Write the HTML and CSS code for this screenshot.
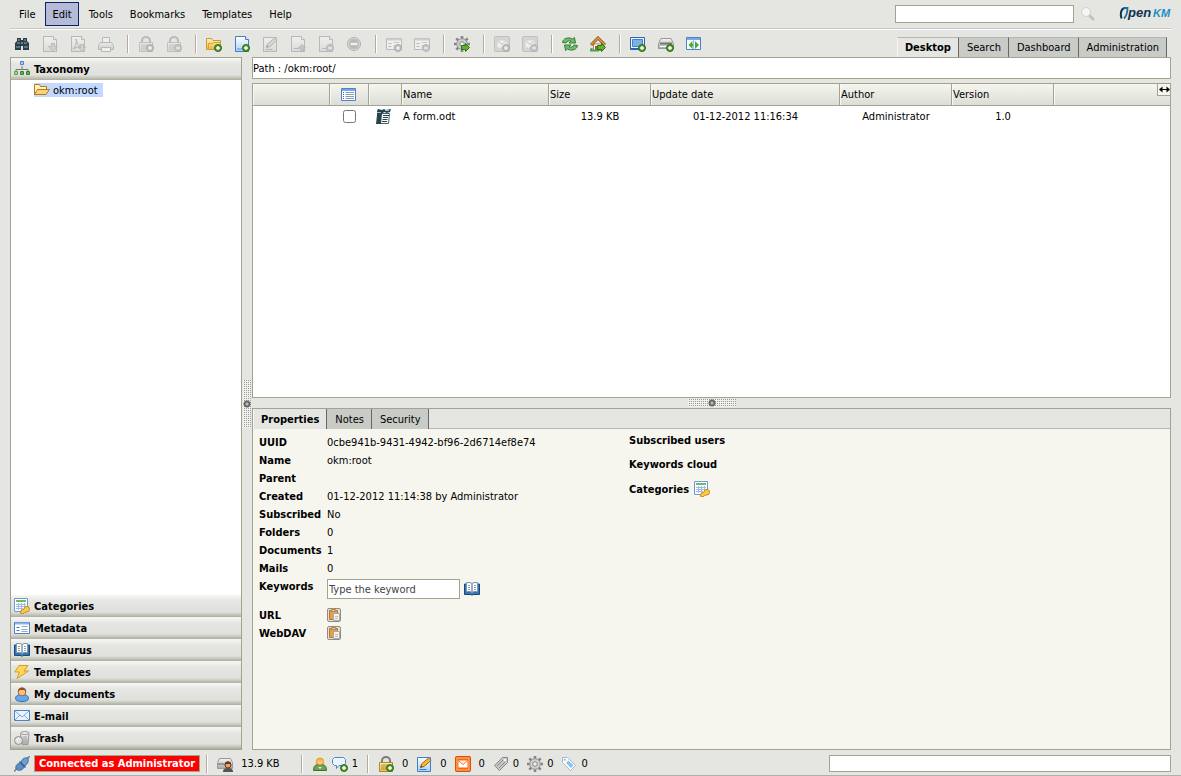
FILE: index.html
```html
<!DOCTYPE html>
<html lang="en">
<head>
	<meta charset="UTF-8">
	<meta name="viewport" content="width=device-width, initial-scale=1.0">
	<title>OpenKM</title>
	<link rel="stylesheet" href="styles.css">
</head>
<body>
	<!-- Icon set -->
	<svg class="icon-set" aria-hidden="true">
		<defs>
			<linearGradient id="gPage" x1="0" y1="0" x2="0" y2="1">
				<stop offset="0" stop-color="#fff"/><stop offset="1" stop-color="#a9d0f7"/>
			</linearGradient>
			<linearGradient id="gGrey" x1="0" y1="0" x2="0" y2="1">
				<stop offset="0" stop-color="#f4f4f4"/><stop offset="1" stop-color="#a9a9a9"/>
			</linearGradient>
			<linearGradient id="gGold" x1="0" y1="0" x2="0" y2="1">
				<stop offset="0" stop-color="#fff3b8"/><stop offset="1" stop-color="#edb93c"/>
			</linearGradient>
		</defs>
		<symbol id="plus" viewBox="0 0 16 16">
			<circle cx="12" cy="12" r="3.5" fill="#4f9a2b" stroke="#2f6b17"/>
			<path d="M12 10v4M10 12h4" stroke="#fff" stroke-width="1.4"/>
		</symbol>
		<symbol id="minus" viewBox="0 0 16 16">
			<circle cx="12" cy="12" r="3.5" fill="#999" stroke="#666"/>
			<path d="M10 12h4" stroke="#fff" stroke-width="1.4"/>
		</symbol>
		<symbol id="arrow" viewBox="0 0 16 16">
			<path d="M7.5 9.5h4v-2l4 4-4 4v-2h-4z" fill="#5fb32d" stroke="#2c7413"/>
		</symbol>
		<symbol id="page" viewBox="0 0 16 16">
			<path d="M1.500.5h10l3 3v12h-13z" fill="url(#gPage)" stroke="#3e7fc6"/>
			<path d="M11.500.5v3h3" fill="#fff" stroke="#3e7fc6"/>
		</symbol>
		<symbol id="binoculars" viewBox="0 0 16 16">
			<path d="M3 2h4v2h2V2h4v3l2 2v7H9v-4H7v4H1V7l2-2z" fill="#2d3e4b"/>
			<path d="M3 7h3M10 7h3M2 11h4M10 11h4M4 4h2M10 4h2" stroke="#93a9b8"/>
			<path d="M7 6h2v2H7z" fill="#6c8291"/>
		</symbol>
		<symbol id="download" viewBox="0 0 16 16">
			<use href="#page"/>
			<path d="M9.500 7.500h3v3h3l-4.500 5-4.500-5h3z" fill="#b0b0b0" stroke="#7e7e7e"/>
		</symbol>
		<symbol id="pdf" viewBox="0 0 16 16">
			<use href="#page"/>
			<path d="M3 13C6 10 7 7 6 3c1 5 3 7 7 8-4-1-7 0-10 2z" fill="none" stroke="#666"/>
			<path d="M10.500 8.500h3v3h2l-3.500 4-3.500-4h2z" fill="#b0b0b0" stroke="#7e7e7e"/>
		</symbol>
		<symbol id="print" viewBox="0 0 16 16">
			<path d="M4.500 7V1.500h7V7" fill="#fff" stroke="#777"/>
			<path d="M2.500 6.500h11l2 3v4h-15v-4z" fill="url(#gGrey)" stroke="#777"/>
			<path d="M3.500 11.500h9v4h-9z" fill="#fff" stroke="#777"/>
		</symbol>
		<symbol id="lock" viewBox="0 0 16 16">
			<path d="M4 7V4.500a4 3.500 0 0 1 8 0V7" fill="none" stroke="#7b7b7b" stroke-width="2"/>
			<path d="M1.500 6.500h13v9h-13z" fill="url(#gGold)" stroke="#b48722"/>
			<path d="M3 9h7M3 11h6M3 13h5" stroke="#a98a45"/>
		</symbol>
		<symbol id="lockAdd" viewBox="0 0 16 16"><use href="#lock"/><use href="#plus"/></symbol>
		<symbol id="lockDel" viewBox="0 0 16 16"><use href="#lock"/><use href="#minus"/></symbol>
		<symbol id="folderAdd" viewBox="0 0 16 16">
			<path d="M.5 13.500v-11h5l1.500 2h7.500v9z" fill="url(#gGold)" stroke="#c99a36"/>
			<path d="M2.500 13V7.500h4l1-1H14" fill="none" stroke="#d7a33b"/>
			<use href="#plus"/>
		</symbol>
		<symbol id="docAdd" viewBox="0 0 16 16"><use href="#page"/><path d="M3 13h6" stroke="#5a9ad8"/><use href="#plus"/></symbol>
		<symbol id="docEdit" viewBox="0 0 16 16">
			<path d="M1.500 1.500h13v14h-13z" fill="url(#gPage)" stroke="#3e7fc6"/>
			<path d="M3.500 13.500h7" stroke="#3e7fc6"/>
			<path d="M4.500 11.500l1-3.500 7-6 2.500 2.500-7 6z" fill="#f7b73c" stroke="#9a6a20"/>
			<path d="M4.500 11.500l.5-2 1.500 1.500z" fill="#333"/>
		</symbol>
		<symbol id="checkIn" viewBox="0 0 16 16">
			<use href="#page"/><path d="M4 12.500h5" stroke="#777"/>
			<path d="M10.500 15v-3h-2l3.500-3.500 3.500 3.500h-2v3z" fill="#999" stroke="#777"/>
		</symbol>
		<symbol id="docDel" viewBox="0 0 16 16"><use href="#page"/><path d="M4 12.500h4" stroke="#777"/><use href="#minus"/></symbol>
		<symbol id="remove" viewBox="0 0 16 16">
			<circle cx="8" cy="8" r="6.500" fill="#777" stroke="#666"/>
			<circle cx="8" cy="8" r="5.500" fill="none" stroke="#ccc"/>
			<path d="M4.500 8h7" stroke="#fff" stroke-width="2.400"/>
		</symbol>
		<symbol id="form" viewBox="0 0 16 16">
			<path d="M.5 2.500h15v11H.5z" fill="#fff" stroke="#4f81c7"/>
			<path d="M1 3.500h14" stroke="#8db4e8" stroke-width="2"/>
			<path d="M2.500 7.500h3M2.500 10.500h3" stroke="#4178cc"/>
			<path d="M7.500 6.500h6M7.500 9.500h6M7.500 11.500h6" stroke="#99a7b8"/>
		</symbol>
		<symbol id="formAdd" viewBox="0 0 16 16"><use href="#form"/><use href="#plus"/></symbol>
		<symbol id="formDel" viewBox="0 0 16 16"><use href="#form"/><use href="#minus"/></symbol>
		<symbol id="gear" viewBox="0 0 16 16">
			<path d="M8 0v16M0 8h16M2.300 2.300l11.400 11.400M13.700 2.300L2.300 13.700" stroke="#858585" stroke-width="2.600"/>
			<circle cx="8" cy="8" r="5.300" fill="#d0d0d0" stroke="#9a9a9a"/>
			<circle cx="8" cy="8" r="2.300" fill="#f1f1f1" stroke="#858585"/>
		</symbol>
		<symbol id="gearRun" viewBox="0 0 16 16"><use href="#gear"/><use href="#arrow"/></symbol>
		<symbol id="subscribe" viewBox="0 0 16 16">
			<rect x=".5" y=".5" width="15" height="15" rx="1" fill="#f36a12" stroke="#d94f05"/>
			<rect x="2" y="2" width="12" height="12" fill="none" stroke="#ffb579"/>
			<path d="M3.500 4.500h9v7h-9z" fill="#fff"/>
			<path d="M3.500 4.500L8 8.500l4.500-4" fill="none" stroke="#f36a12"/>
		</symbol>
		<symbol id="subPlain" viewBox="0 0 16 16">
			<rect x=".5" y=".5" width="15" height="15" rx="1" fill="#bbb" stroke="#888"/>
			<path d="M3.500 4.500h9v7h-9z" fill="#fff"/>
			<path d="M3.500 4.500L8 8.500l4.500-4" fill="none" stroke="#888"/>
		</symbol>
		<symbol id="subAdd" viewBox="0 0 16 16"><use href="#subPlain"/><use href="#plus"/></symbol>
		<symbol id="subDel" viewBox="0 0 16 16"><use href="#subPlain"/><use href="#minus"/></symbol>
		<symbol id="refresh" viewBox="0 0 16 16">
			<path d="M.5 6.500C1 2.500 6 .5 10.500 3l2-1.500 1 5.500H7l2-2C7 4.500 5 5 4 7z" fill="#71b96c" stroke="#34813a"/>
			<path d="M15.500 9.500C15 13.500 10 15.500 5.500 13l-2 1.500L2.500 9H9l-2 2c2 .5 4 0 5-2z" fill="#71b96c" stroke="#34813a"/>
		</symbol>
		<symbol id="home" viewBox="0 0 16 16">
			<path d="M3.500 8h9v6.500h-9z" fill="#fff" stroke="#b88452"/>
			<path d="M1 9l7-7 7 7" fill="none" stroke="#8d541b" stroke-width="3"/>
			<path d="M1 9l7-7 7 7" fill="none" stroke="#e39a45" stroke-width="1.400"/>
			<path d="M5 10h3v4H5z" fill="#9d612a"/><path d="M0 14.500h9M1.500 12v2" stroke="#4aa25b" stroke-width="2"/>
			<use href="#arrow"/>
		</symbol>
		<symbol id="scan" viewBox="0 0 16 16">
			<path d="M.5 1.500h14v12H.5z" fill="#e9f3fd" stroke="#2f65a9"/>
			<path d="M2.500 3.500h10v7h-10z" fill="#79b0e6" stroke="#4682c2"/><path d="M1 12.500h13" stroke="#2f65a9"/>
			<use href="#plus"/>
		</symbol>
		<symbol id="scanner" viewBox="0 0 16 16">
			<path d="M3 2.500h10l2.500 5v5H.5v-5z" fill="url(#gGrey)" stroke="#999"/>
			<path d="M2 7.500h12" stroke="#777" stroke-width="2"/><path d="M2 10.500h9" stroke="#fff"/>
		</symbol>
		<symbol id="scanAdd" viewBox="0 0 16 16"><use href="#scanner"/><use href="#plus"/></symbol>
		<symbol id="resize" viewBox="0 0 16 16">
			<path d="M.5 1.500h14v12H.5z" fill="#f7fbff" stroke="#4f81c7"/><path d="M1 3h13" stroke="#77a9e6" stroke-width="2"/>
			<path d="M6.500 5v3H8v2H6.500v3L2.500 9zM9 5v8l4-4z" fill="#48a844"/><path d="M7.500 4v9" stroke="#9dbde3"/>
		</symbol>
		<symbol id="taxonomy" viewBox="0 0 16 16">
			<path d="M8 5v4M2 10.500V8.500h12v2" fill="none" stroke="#777"/>
			<path d="M6.500.5h3v3h-3z" fill="#a6ccf7" stroke="#4c83cf"/>
			<path d="M.5 10.500h3v3h-3z" fill="#a5d993" stroke="#54a543"/>
			<path d="M6.500 10.500h3v3h-3z" fill="#5fb24a" stroke="#34852a"/>
			<path d="M12.500 10.500h3v3h-3z" fill="#5fb24a" stroke="#34852a"/>
		</symbol>
		<symbol id="folderOpen" viewBox="0 0 16 16">
			<path d="M.5 12.500v-10h5l1 2h6v3" fill="#fff2be" stroke="#b57a1e"/>
			<path d="M.5 12.500l3-5h12l-3.500 5z" fill="#f8d479" stroke="#b57a1e"/>
		</symbol>
		<symbol id="categories" viewBox="0 0 16 16">
			<path d="M.5.5h13v13H.5z" fill="#fff" stroke="#6c9bd8"/>
			<path d="M2 3h10" stroke="#76b868" stroke-width="2"/>
			<path d="M2 6.500h10M2 8.500h10M2 10.500h7M4.500 5v7M7.500 5v7M10.500 5v4" stroke="#9cbbe4"/>
			<path d="M6.500 15.500l.5-3 3-1.500a2.800 2.800 0 1 1 2.500 3l-2 .5-1.500 1.500z" fill="#f9c94c" stroke="#c98a1d"/>
		</symbol>
		<symbol id="book" viewBox="0 0 16 16">
			<path d="M.5 3v10.500H7l1 1 1-1h6.500V3z" fill="#3674ad" stroke="#174b80"/>
			<path d="M2.500 1.500H6l2 1v9l-2-1H2.500zM13.500 1.500H10l-2 1v9l2-1h3.500z" fill="#fff" stroke="#7898b5"/>
			<path d="M4 4.500h2M4 6.500h2M4 8.500h2M10 4.500h2M10 6.500h2M10 8.500h2" stroke="#999"/>
		</symbol>
		<symbol id="bolt" viewBox="0 0 16 16">
			<path d="M5 1.500L.8 8h4.500L3 14.500 14.500 7H10l4-5.500z" fill="#fcd75b" stroke="#d99b22"/>
		</symbol>
		<symbol id="user" viewBox="0 0 16 16">
			<path d="M1.500 12.500c0-3 3-4 6.500-4s6.500 1 6.500 4c0 2-3 3-6.500 3s-6.500-1-6.500-3z" fill="#62a7f0" stroke="#2b68b3"/>
			<circle cx="8" cy="6" r="3.800" fill="#ffc183" stroke="#a9622e"/>
			<path d="M4 6C3 0 13 0 12 6l-1.500-2h-5z" fill="#8d4d1f"/>
		</symbol>
		<symbol id="userGreen" viewBox="0 0 16 16">
			<path d="M1.500 14.500c0-5 2-6 6.500-6s6.500 1 6.500 6z" fill="#6ba24f" stroke="#3d7528"/><path d="M6 11l2 2 2-2z" fill="#dcefc9"/>
			<circle cx="8" cy="5.500" r="3.500" fill="#ffc48a" stroke="#c88b23"/>
			<path d="M4 8C2 0 14 0 12 8l-1-3.500H5z" fill="#f0b329"/>
		</symbol>
		<symbol id="mail" viewBox="0 0 16 16">
			<path d="M.5 2.500h15v10H.5z" fill="#eaf4ff" stroke="#4e82cb"/>
			<path d="M1 3l7 6 7-6M1 12l5-5M15 12l-5-5" fill="none" stroke="#7ba8e0"/>
		</symbol>
		<symbol id="trash" viewBox="0 0 16 16">
			<path d="M6.500 3.500h8.500l-1 11H8z" fill="url(#gGrey)" stroke="#999"/>
			<ellipse cx="10.800" cy="3" rx="4" ry="1.500" fill="#eee" stroke="#999"/>
			<path d="M10 6v7M12 6v7" stroke="#aaa"/>
			<circle cx="4.500" cy="10.500" r="4" fill="#e3e3e3" stroke="#8b8b8b"/><path d="M3 10l2-2" stroke="#fff"/>
		</symbol>
		<symbol id="plug" viewBox="0 0 16 16">
			<path d="M0 15.500l4-4M12 4l4-4" stroke="#667f9c" stroke-width="1.500"/>
			<path d="M2 13c-1-4 2-6 5-6l3 3c0 3-3 5-6 4z" fill="#5d8dc2" stroke="#4470a6"/>
			<path d="M7 7c0-3 3-6 7-5 1 4-1 7-4 8z" fill="#6f9dcd" stroke="#4470a6"/><path d="M5.500 5.500l6 6" stroke="#345f94" stroke-width="1.500"/>
		</symbol>
		<symbol id="quota" viewBox="0 0 16 16">
			<path d="M2.500 2.500h11l2 4v6H.5v-6z" fill="url(#gGrey)" stroke="#999"/><path d="M1 8h8" stroke="#999" stroke-width="2"/>
			<path d="M6 16c0-3 2-4 5-4s5 1 5 4z" fill="#555"/><circle cx="11" cy="9" r="3" fill="#e5a36b" stroke="#6b3a1c"/>
			<path d="M8 9c-1-5 7-5 6 0l-1-1H9z" fill="#6b3a1c"/>
		</symbol>
		<symbol id="chat" viewBox="0 0 16 16">
			<path d="M2.500 1.500h9l2 2v4l-2 2H7l-2.500 3v-3h-2l-2-2v-4z" fill="#eaf5ff" stroke="#5389cb"/><use href="#plus"/>
		</symbol>
		<symbol id="clip" viewBox="0 0 16 16">
			<path d="M1.500 9.500l8-8h5v5l-8 8z" fill="#c9c9c9" stroke="#888"/>
			<path d="M4 10l6-6M6 12l6-6" stroke="#888"/><circle cx="12" cy="4" r="1" fill="#fff"/>
		</symbol>
		<symbol id="tag" viewBox="0 0 16 16">
			<path d="M1.500 1.500h5l8 8-5 5-8-8z" fill="#fff" stroke="#a9b8c6"/>
			<path d="M5 7l2.500-2.500 5 5L10 12z" fill="#83c3f5"/><circle cx="3.800" cy="3.800" r="1" fill="#8ba"/>
		</symbol>
		<symbol id="list" viewBox="0 0 16 16">
			<path d="M.5 1.500h14v12H.5z" fill="#fff" stroke="#4f81c7"/><path d="M1 3h13" stroke="#77a9e6" stroke-width="2"/>
			<path d="M4.500 5.500H13M4.500 7.500H13M4.500 9.500H13M4.500 11.500H13" stroke="#8d9db0"/>
			<path d="M2 5.500h1M2 7.500h1M2 9.500h1M2 11.500h1" stroke="#36c"/>
		</symbol>
		<symbol id="odt" viewBox="0 0 16 16">
			<path d="M4.500 5.500h9l-1 10h-9z" fill="#fff" stroke="#49636e"/>
			<path d="M1 3l1-2 4 1 2-1 2 1 5-1-1 3-3 1-3-1-2 2-1 10H0l1-9z" fill="#29434e"/>
			<path d="M1 4.500h4M9 2.500h4" stroke="#a9bac2"/>
			<path d="M7 7.500h6M7 9.500h5M6.500 11.500h5M6 13.500h5" stroke="#29434e"/>
		</symbol>
		<symbol id="paste" viewBox="0 0 12 12">
			<path d="M1.500 1.500h8v9h-8z" fill="#e6a04a" stroke="#b97526"/><path d="M3.500.5h4v2h-4z" fill="#e9c68e" stroke="#b9874a"/>
			<path d="M5.500 4.500h6v7h-6z" fill="#f4f4f4" stroke="#aaa"/><path d="M7 7.500h3M7 9.500h3" stroke="#bbb"/>
		</symbol>
		<symbol id="search" viewBox="0 0 16 16">
			<path d="M9 9l5 5" stroke="#c0c0bd" stroke-width="2.500"/><circle cx="6" cy="6" r="4.500" fill="#f5f5f5" stroke="#cfcfcd"/>
		</symbol>
	</svg>

	<header class="menu-bar">
		<nav class="menu">
			<button class="menu-item">File</button>
			<button class="menu-item active">Edit</button>
			<button class="menu-item">Tools</button>
			<button class="menu-item">Bookmarks</button>
			<button class="menu-item">Templates</button>
			<button class="menu-item">Help</button>
		</nav>
		<form class="quick-search">
			<input type="text" class="field" aria-label="Search">
			<button type="button" class="icon-button" aria-label="Search"><svg class="icon"><use href="#search"/></svg></button>
		</form>
		<svg class="logo" viewBox="0 0 52 16" role="img" aria-label="OpenKM">
			<path d="M5.500 2C2 3 .8 8 2.500 12.500" fill="none" stroke="#0c3350" stroke-width="2"/>
			<path d="M4.500 2h4C8.500 7 7.500 10 5 12.500" fill="none" stroke="#1d6f9f" stroke-width="1.800"/>
			<text x="9" y="11" class="logo-pen">pen</text>
			<text x="34" y="11" class="logo-km">KM</text>
		</svg>
	</header>

	<div class="tool-bar">
		<div class="tools">
			<div class="group">
				<button class="icon-button" aria-label="Find"><svg class="icon"><use href="#binoculars"/></svg></button>
				<button class="icon-button" disabled aria-label="Download"><svg class="icon"><use href="#download"/></svg></button>
				<button class="icon-button" disabled aria-label="Download as PDF"><svg class="icon"><use href="#pdf"/></svg></button>
				<button class="icon-button" disabled aria-label="Print"><svg class="icon"><use href="#print"/></svg></button>
			</div>
			<div class="group">
				<button class="icon-button" disabled aria-label="Lock"><svg class="icon"><use href="#lockAdd"/></svg></button>
				<button class="icon-button" disabled aria-label="Unlock"><svg class="icon"><use href="#lockDel"/></svg></button>
			</div>
			<div class="group">
				<button class="icon-button" aria-label="Create folder"><svg class="icon"><use href="#folderAdd"/></svg></button>
				<button class="icon-button" aria-label="Add document"><svg class="icon"><use href="#docAdd"/></svg></button>
				<button class="icon-button" disabled aria-label="Edit"><svg class="icon"><use href="#docEdit"/></svg></button>
				<button class="icon-button" disabled aria-label="Check in"><svg class="icon"><use href="#checkIn"/></svg></button>
				<button class="icon-button" disabled aria-label="Cancel edit"><svg class="icon"><use href="#docDel"/></svg></button>
				<button class="icon-button" disabled aria-label="Delete"><svg class="icon"><use href="#remove"/></svg></button>
			</div>
			<div class="group">
				<button class="icon-button" disabled aria-label="Add property group"><svg class="icon"><use href="#formAdd"/></svg></button>
				<button class="icon-button" disabled aria-label="Remove property group"><svg class="icon"><use href="#formDel"/></svg></button>
			</div>
			<div class="group">
				<button class="icon-button" aria-label="Start workflow"><svg class="icon"><use href="#gearRun"/></svg></button>
			</div>
			<div class="group">
				<button class="icon-button" disabled aria-label="Add subscription"><svg class="icon"><use href="#subAdd"/></svg></button>
				<button class="icon-button" disabled aria-label="Remove subscription"><svg class="icon"><use href="#subDel"/></svg></button>
			</div>
			<div class="group">
				<button class="icon-button" aria-label="Refresh"><svg class="icon"><use href="#refresh"/></svg></button>
				<button class="icon-button" aria-label="Home"><svg class="icon"><use href="#home"/></svg></button>
			</div>
			<div class="group">
				<button class="icon-button" aria-label="Scanner"><svg class="icon"><use href="#scan"/></svg></button>
				<button class="icon-button" aria-label="Upload"><svg class="icon"><use href="#scanAdd"/></svg></button>
				<button class="icon-button" aria-label="Resize panels"><svg class="icon"><use href="#resize"/></svg></button>
			</div>
		</div>
		<nav class="tabs">
			<button class="tab selected">Desktop</button>
			<button class="tab">Search</button>
			<button class="tab">Dashboard</button>
			<button class="tab">Administration</button>
		</nav>
	</div>

	<main class="workspace">
		<aside class="stack">
			<button class="stack-title"><svg class="icon"><use href="#taxonomy"/></svg>Taxonomy</button>
			<div class="tree">
				<a href="#" class="tree-node"><svg class="icon"><use href="#folderOpen"/></svg>okm:root</a>
			</div>
			<button class="stack-title"><svg class="icon"><use href="#categories"/></svg>Categories</button>
			<button class="stack-title"><svg class="icon"><use href="#form"/></svg>Metadata</button>
			<button class="stack-title"><svg class="icon"><use href="#book"/></svg>Thesaurus</button>
			<button class="stack-title"><svg class="icon"><use href="#bolt"/></svg>Templates</button>
			<button class="stack-title"><svg class="icon"><use href="#user"/></svg>My documents</button>
			<button class="stack-title"><svg class="icon"><use href="#mail"/></svg>E-mail</button>
			<button class="stack-title"><svg class="icon"><use href="#trash"/></svg>Trash</button>
		</aside>

		<div class="splitter vertical"><span class="grip"></span></div>

		<section class="content">
			<div class="path">Path : /okm:root/</div>

			<div class="browser">
				<table class="files">
					<colgroup>
						<col class="col-status"><col class="col-check"><col class="col-type"><col class="col-name"><col class="col-size">
						<col class="col-date"><col class="col-author"><col class="col-version"><col>
					</colgroup>
					<thead>
						<tr>
							<th></th>
							<th><svg class="icon"><use href="#list"/></svg></th>
							<th></th>
							<th>Name</th>
							<th>Size</th>
							<th>Update date</th>
							<th>Author</th>
							<th>Version</th>
							<th></th>
						</tr>
					</thead>
					<tbody>
						<tr>
							<td></td>
							<td><input type="checkbox" class="check" aria-label="Select A form.odt"></td>
							<td class="type"><svg class="icon"><use href="#odt"/></svg></td>
							<td class="left">A form.odt</td>
							<td>13.9 KB</td>
							<td>01-12-2012 11:16:34</td>
							<td>Administrator</td>
							<td>1.0</td>
							<td></td>
						</tr>
					</tbody>
				</table>
				<button class="fit" aria-label="Fit columns">
					<svg class="fit-icon" viewBox="0 0 11 7"><path d="M0 3.500L3.500.5v6zM11 3.500L7.500.5v6z"/><path d="M2 3.500h7" stroke="#000"/></svg>
				</button>
			</div>

			<div class="splitter horizontal"><span class="grip"></span></div>

			<div class="details">
				<nav class="tabs detail-tabs">
					<button class="tab selected">Properties</button>
					<button class="tab">Notes</button>
					<button class="tab">Security</button>
				</nav>
				<div class="properties">
					<table class="props">
						<tr><th>UUID</th><td>0cbe941b-9431-4942-bf96-2d6714ef8e74</td></tr>
						<tr><th>Name</th><td>okm:root</td></tr>
						<tr><th>Parent</th><td></td></tr>
						<tr><th>Created</th><td>01-12-2012 11:14:38 by Administrator</td></tr>
						<tr><th>Subscribed</th><td>No</td></tr>
						<tr><th>Folders</th><td>0</td></tr>
						<tr><th>Documents</th><td>1</td></tr>
						<tr><th>Mails</th><td>0</td></tr>
						<tr class="keywords">
							<th><label for="keyword">Keywords</label></th>
							<td>
								<div class="keyword-row">
									<input type="text" id="keyword" class="field" placeholder="Type the keyword">
									<button class="icon-button" aria-label="Thesaurus"><svg class="icon"><use href="#book"/></svg></button>
								</div>
							</td>
						</tr>
						<tr><th>URL</th><td><button class="copy" aria-label="Copy URL"><svg class="copy-icon"><use href="#paste"/></svg></button></td></tr>
						<tr><th>WebDAV</th><td><button class="copy" aria-label="Copy WebDAV"><svg class="copy-icon"><use href="#paste"/></svg></button></td></tr>
					</table>
					<div class="extras">
						<h2>Subscribed users</h2>
						<h2>Keywords cloud</h2>
						<h2>Categories <svg class="icon"><use href="#categories"/></svg></h2>
					</div>
				</div>
			</div>
		</section>
	</main>

	<footer class="status-bar">
		<div class="status connection">
			<svg class="icon"><use href="#plug"/></svg>
			<span class="connected">Connected as Administrator</span>
		</div>
		<div class="status quota">
			<svg class="icon"><use href="#quota"/></svg>
			<span>13.9 KB</span>
		</div>
		<div class="status users">
			<svg class="icon"><use href="#userGreen"/></svg>
			<svg class="icon"><use href="#chat"/></svg>
			<span>1</span>
		</div>
		<div class="status counters">
			<span class="counter wide"><svg class="icon"><use href="#lockAdd"/></svg>0</span>
			<span class="counter wide"><svg class="icon"><use href="#docEdit"/></svg>0</span>
			<span class="counter wide"><svg class="icon"><use href="#subscribe"/></svg>0</span>
			<span class="counter"><svg class="icon"><use href="#clip"/></svg>0</span>
			<span class="counter"><svg class="icon"><use href="#gear"/></svg>0</span>
			<span class="counter"><svg class="icon"><use href="#tag"/></svg>0</span>
		</div>
		<input type="text" class="field message" aria-label="Messages" readonly>
	</footer>
</body>
</html>
```
FILE: styles.css
```css
* {
	box-sizing: border-box;
}
body {
	margin: 0;
	height: 100vh;
	display: flex;
	flex-direction: column;
	background-color: #e5e6e1;
	border-bottom: 1px solid #b0b0ac;
	color: #000;
	font-family: "DejaVu Sans Condensed", "DejaVu Sans", sans-serif;
	font-size: 11px;
	line-height: 15px;
}
button, input {
	font: inherit;
	color: inherit;
}
button {
	margin: 0;
	padding: 0;
	border: 0;
	background: none;
}
.icon-set {
	position: absolute;
	width: 0;
	height: 0;
}
.icon {
	width: 16px;
	height: 16px;
	flex: none;
	display: block;
}
.icon-button:disabled .icon {
	filter: grayscale(1);
	opacity: 0.4;
}
.field {
	border: 1px solid #a2a391;
	background-color: #fff;
	padding: 0 1px;
	outline: none;
}
.field::placeholder {
	color: #444;
	opacity: 1;
}

/* Menu */
.menu-bar {
	display: flex;
	align-items: center;
	height: 30px;
	margin: 0 10px;
	padding: 0 0 2px 2px;
	border-bottom: 1px solid #fff;
	box-shadow: inset 0 -1px #c6c6c2;
}
.menu {
	display: flex;
	gap: 3px;
	flex: 1;
}
.menu-item {
	height: 24px;
	padding: 1px 6px 0;
	border: 1px solid transparent;
}
.menu-item.active {
	border-color: #08246b;
	background-color: #b5bad6;
}
.quick-search {
	display: flex;
	align-items: center;
	gap: 6px;
}
.quick-search .field {
	width: 179px;
	height: 18px;
}
.logo {
	width: 52px;
	height: 16px;
	margin-left: 23px;
}
.logo-pen {
	font: italic bold 13px "Liberation Sans", sans-serif;
	fill: #0c3350;
}
.logo-km {
	font: italic bold 11px "Liberation Sans", sans-serif;
	fill: #1d8fc4;
}

/* Toolbar */
.tool-bar {
	display: flex;
	justify-content: space-between;
	height: 27px;
	padding: 0 14px;
}
.tools {
	display: flex;
	align-items: center;
}
.group {
	display: flex;
	align-items: center;
	gap: 12px;
	height: 18px;
	margin-right: 9px;
	padding-right: 14px;
	border-right: 1px solid #fff;
	box-shadow: inset -1px 0 #b9a998;
}
.group:last-child {
	border: 0;
	box-shadow: none;
}
.tabs {
	display: flex;
	align-items: flex-end;
}
.tab {
	height: 20px;
	padding: 0 7px 0 8px;
	border-top: 1px solid #b5b6b2;
	border-right: 1px solid #666;
	background-color: #c9cbc6;
}
.tab.selected {
	border-left: 1px solid #f6f6f4;
	padding-left: 7px;
	background-color: #e5e6e1;
	font-weight: bold;
}

/* Workspace */
.workspace {
	display: flex;
	flex: 1;
	min-height: 0;
	margin: 0 10px;
}
.stack {
	display: flex;
	flex-direction: column;
	width: 232px;
	border: 1px solid #a2a391;
	background-color: #fff;
}
.stack-title {
	display: flex;
	align-items: center;
	gap: 4px;
	height: 22px;
	padding: 0 3px;
	background: linear-gradient(#f7f7f5, #e5e6e1 6px, #e0e1dc 17px, #acad9e);
	font-weight: bold;
}
.tree {
	flex: 1;
	padding: 3px 0 0 23px;
}
.tree-node {
	display: inline-flex;
	align-items: center;
	gap: 3px;
	height: 14px;
	padding-right: 5px;
	background-color: #c3d9ff;
	color: #000;
	text-decoration: none;
}
.splitter {
	display: flex;
	align-items: center;
	justify-content: center;
	flex: none;
}
.vertical {
	width: 10px;
}
.horizontal {
	height: 10px;
}
.grip {
	width: 48px;
	height: 8px;
	background: radial-gradient(circle, #bbb 1px, #666 2px, #666 3px, transparent 4px), conic-gradient(#9a9a96 25%, #f0f0ed 0) 0 0 / 2px 2px;
}
.vertical .grip {
	width: 8px;
	height: 48px;
}
.content {
	display: flex;
	flex-direction: column;
	flex: 1;
	min-width: 0;
}
.path {
	height: 22px;
	margin-bottom: 4px;
	padding: 3px 0;
	border: 1px solid #a2a391;
	background-color: #fff;
}

/* File list */
.browser {
	position: relative;
	flex: 12 1 0;
	min-height: 0;
	border: 1px solid #a2a391;
	background-color: #fff;
}
.files {
	width: 100%;
	table-layout: fixed;
	border-spacing: 0;
}
.files th {
	height: 22px;
	padding: 0 1px;
	border-right: 1px solid #a2a391;
	border-bottom: 1px solid #a2a391;
	box-shadow: inset 1px 0 #f8f8f4;
	background: linear-gradient(#f6f6ee, #dcddd8);
	font-weight: normal;
	text-align: left;
}
.files th:last-child {
	border-right: 0;
}
.files td {
	height: 20px;
	padding: 0 1px;
	text-align: center;
}
.files td.left {
	text-align: left;
}
.files td.type {
	padding-right: 5px;
}
.files .icon {
	margin: 0 auto;
}
.files .check {
	display: block;
	width: 13px;
	height: 13px;
	margin: 0 auto;
}
.col-status { width: 77px; }
.col-check { width: 39px; }
.col-type { width: 33px; }
.col-name { width: 147px; }
.col-size { width: 102px; }
.col-date { width: 189px; }
.col-author { width: 112px; }
.col-version { width: 102px; }
.fit {
	position: absolute;
	top: 0;
	right: 0;
	display: flex;
	align-items: center;
	justify-content: center;
	width: 13px;
	height: 12px;
	border: 1px solid #a2a391;
	border-width: 0 0 1px 1px;
	background-color: #f6f6ee;
}
.fit-icon {
	width: 11px;
	height: 7px;
}

/* Properties */
.details {
	display: flex;
	flex-direction: column;
	flex: 13 1 0;
	min-height: 0;
	border: 1px solid #a2a391;
	background-color: #f6f6ee;
}
.detail-tabs {
	background-color: #e5e6e1;
	box-shadow: inset 0 -1px #b5b6b2;
}
.detail-tabs .tab {
	border-top: 0;
}
.properties {
	display: flex;
	padding: 4px 6px;
}
.props {
	width: 370px;
	border-spacing: 0;
	table-layout: fixed;
}
.props th, .props td {
	height: 18px;
	padding: 0;
	text-align: left;
}
.props th {
	width: 68px;
}
.props .keywords th, .props .keywords td {
	height: 29px;
	padding-top: 2px;
	vertical-align: top;
}
.keyword-row {
	display: flex;
	align-items: center;
	gap: 4px;
}
.keyword-row .field {
	width: 133px;
	height: 20px;
}
.copy {
	display: block;
	width: 14px;
	height: 14px;
	border: 1px solid #8c8c88;
	border-radius: 2px;
	background-color: #e3e3df;
}
.copy-icon {
	display: block;
	width: 12px;
	height: 12px;
}
.extras {
	display: flex;
	flex-direction: column;
	gap: 9px;
}
.extras h2 {
	display: flex;
	align-items: center;
	gap: 5px;
	margin: 0;
	font-size: 11px;
}

/* Status bar */
.status-bar {
	display: flex;
	align-items: center;
	height: 25px;
	padding: 2px 10px 0 14px;
}
.status {
	display: flex;
	align-items: center;
	gap: 4px;
	height: 18px;
}
.connection, .quota, .users {
	margin-right: 9px;
	border-right: 1px solid #fff;
	box-shadow: inset -1px 0 #b9a998;
}
.connection {
	padding-right: 7px;
}
.connected {
	padding: 0 4px;
	border: 1px solid #a2a391;
	background-color: #f00;
	color: #fff;
	font-weight: bold;
}
.quota {
	gap: 8px;
	padding-right: 22px;
}
.users {
	padding-right: 10px;
}
.counters {
	gap: 8px;
}
.counter {
	display: flex;
	align-items: center;
	gap: 4px;
}
.counter.wide {
	gap: 8px;
}
.message {
	width: 342px;
	height: 17px;
	margin-left: auto;
}
```
